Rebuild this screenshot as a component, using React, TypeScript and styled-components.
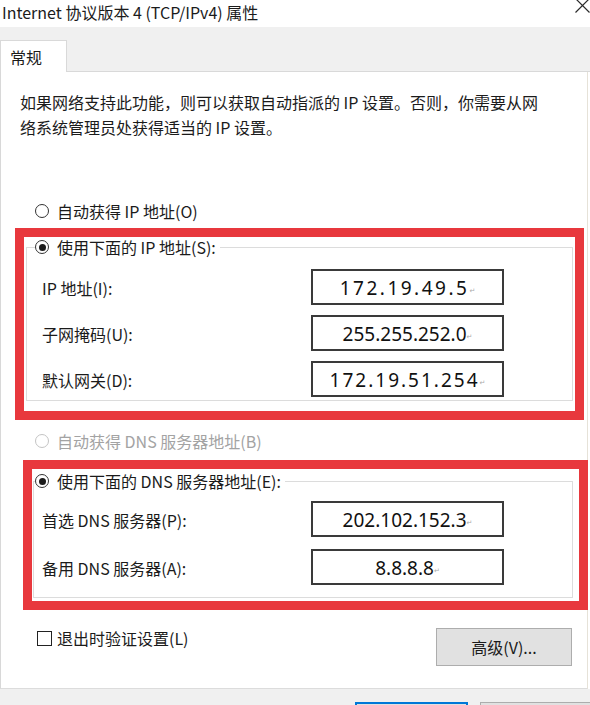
import React from 'react';
import styled, { createGlobalStyle } from 'styled-components';

const Global = createGlobalStyle`
  html, body { margin: 0; padding: 0; background: #fff; }
  body {
    width: 590px; height: 705px; overflow: hidden;
    font-family: "Noto Sans CJK SC", "Noto Sans", sans-serif;
    color: #1b1b1b;
  }
  * { box-sizing: border-box; }
`;

const Window = styled.div`
  width: 590px; height: 705px;
  display: flex; flex-direction: column;
  background: #fff; overflow: hidden;
`;

const TitleBar = styled.div`
  height: 27px; flex: 0 0 auto;
  display: flex; justify-content: space-between; align-items: flex-start;
  padding-left: 2px; background: #fff;
`;

const Title = styled.div`
  font-size: 16px; line-height: normal; white-space: nowrap;
`;

const CloseIcon = styled.svg`
  margin-top: -3px;
  flex: 0 0 auto;
`;

const TabStrip = styled.div`
  height: 45px; flex: 0 0 auto;
  background: #f0f0f0;
  border-bottom: 1px solid #d9d9d9;
  display: flex; align-items: flex-end;
`;

const Tab = styled.div`
  position: relative; z-index: 1;
  width: 67px; height: 32px; margin-bottom: -1px;
  background: #fff;
  border: 1px solid #d9d9d9; border-bottom: none;
  display: flex; align-items: center;
  padding-left: 9px;
  font-size: 16px;
`;

const Panel = styled.div`
  flex: 0 0 auto;
  width: 588px; height: 617px;
  border-left: 1px solid #d8d8d8;
  border-right: 1px solid #e6e2d8;
  border-bottom: 1px solid #dcdcdc;
  display: flex; flex-direction: column; align-items: flex-start;
  padding-top: 18px;
`;

const Description = styled.p`
  margin: 0; padding-left: 19px;
  font-size: 16px; line-height: 25px; height: 50px;
  white-space: nowrap;
`;

const RadioRow = styled.div<{ $top: number; $disabled?: boolean }>`
  display: flex; align-items: center; gap: 8px;
  height: 20px; margin-top: ${p => p.$top}px;
  padding-left: 34px;
  font-size: 16px;
  color: ${p => (p.$disabled ? '#a3a3a3' : '#1b1b1b')};
`;

const RadioCircle = styled.span<{ $checked?: boolean; $disabled?: boolean }>`
  width: 14px; height: 14px; border-radius: 50%;
  border: 1px solid ${p => (p.$disabled ? '#c4c4c4' : '#333')};
  background: #fff;
  display: flex; align-items: center; justify-content: center;
  flex: 0 0 auto;
  &::after {
    content: '';
    width: 7px; height: 7px; border-radius: 50%;
    background: ${p => (p.$checked ? '#1b1b1b' : 'transparent')};
  }
`;

const RedBox = styled.div<{ $top: number; $left: number; $width: number }>`
  margin-top: ${p => p.$top}px;
  margin-left: ${p => p.$left}px;
  width: ${p => p.$width}px;
  flex: 0 0 auto;
  border: 9px solid #e8383d;
  display: flex; flex-direction: column;
`;

const Group = styled.div<{ $m: string; $pad: string; $gap: number }>`
  position: relative;
  margin: ${p => p.$m};
  border: 1px solid #dcdcdc;
  padding: ${p => p.$pad};
  display: grid;
  grid-template-columns: 269px 193px;
  row-gap: ${p => p.$gap}px;
  align-items: center;
`;

const Legend = styled.div<{ $left: number }>`
  position: absolute; top: -11px; left: ${p => p.$left}px;
  display: flex; align-items: center; gap: 8px;
  height: 20px; padding-right: 4px;
  background: #fff; font-size: 16px;
`;

const FieldLabel = styled.span`
  font-size: 16px; line-height: 20px; padding-top: 2px;
`;

const AddrBox = styled.div<{ $spacing: number }>`
  width: 193px; height: 36px;
  border: 2px solid #3a3a3a;
  display: flex; align-items: center; justify-content: center;
  font-family: "Noto Sans", "DejaVu Sans", sans-serif;
  font-size: 19px;
  letter-spacing: ${p => p.$spacing}px;
  color: #111;
  padding-top: 1px;
`;

const Mark = styled.span`
  font-size: 7px; color: #aaa; letter-spacing: 0; align-self: flex-end; margin-bottom: 8px;
`;

const BottomRow = styled.div`
  margin-top: 18px; width: 100%;
  display: flex; justify-content: space-between; align-items: flex-start;
  padding-left: 36px; padding-right: 15px;
`;

const CheckLabel = styled.div`
  margin-top: 1px; height: 18px;
  display: flex; align-items: center; gap: 5px;
  font-size: 16px;
`;

const CheckBox = styled.span`
  width: 15px; height: 15px; border: 1px solid #222; background: #fff;
  flex: 0 0 auto;
`;

const Button = styled.div`
  width: 136px; height: 38px;
  background: #e1e1e1; border: 1px solid #adadad;
  display: flex; align-items: center; justify-content: center;
  font-size: 16px;
`;

const Footer = styled.div`
  flex: 1 1 auto;
  background: #f0f0f0;
  display: flex; gap: 12px;
  padding-top: 13px; padding-left: 355px;
`;

const FooterButton = styled.div<{ $primary?: boolean; $w: number }>`
  width: ${p => p.$w}px; height: 30px; flex: 0 0 auto;
  background: #e1e1e1;
  border: ${p => (p.$primary ? '2px solid #0078d7' : '1px solid #adadad')};
`;

type Field = { label: string; value: string; spacing: number };

const ipFields: Field[] = [
  { label: 'IP 地址(I):', value: '172.19.49.5', spacing: 2.5 },
  { label: '子网掩码(U):', value: '255.255.252.0', spacing: 0 },
  { label: '默认网关(D):', value: '172.19.51.254', spacing: 2 },
];

const dnsFields: Field[] = [
  { label: '首选 DNS 服务器(P):', value: '202.102.152.3', spacing: 0 },
  { label: '备用 DNS 服务器(A):', value: '8.8.8.8', spacing: 0 },
];

const Fields = ({ items }: { items: Field[] }) => (
  <>
    {items.map(f => (
      <React.Fragment key={f.label}>
        <FieldLabel>{f.label}</FieldLabel>
        <AddrBox $spacing={f.spacing}>
          {f.value}
          <Mark>↵</Mark>
        </AddrBox>
      </React.Fragment>
    ))}
  </>
);

export default function App() {
  return (
    <>
      <Global />
      <Window>
        <TitleBar>
          <Title>Internet 协议版本 4 (TCP/IPv4) 属性</Title>
          <CloseIcon width="16" height="16" viewBox="0 0 16 16">
            <path d="M1.5 1.5 L15.5 15.5 M15.5 1.5 L1.5 15.5" stroke="#2b2b2b" strokeWidth="1.2" fill="none" />
          </CloseIcon>
        </TitleBar>
        <TabStrip>
          <Tab>常规</Tab>
        </TabStrip>
        <Panel>
          <Description>
            如果网络支持此功能，则可以获取自动指派的 IP 设置。否则，你需要从网
            <br />
            络系统管理员处获得适当的 IP 设置。
          </Description>

          <RadioRow $top={61}>
            <RadioCircle />
            自动获得 IP 地址(O)
          </RadioRow>

          <RedBox $top={7} $left={14} $width={569}>
            <Group $m="10px 2px 10px 2px" $pad="21px 0 3px 15px" $gap={10}>
              <Legend $left={8}>
                <RadioCircle $checked />
                使用下面的 IP 地址(S):
              </Legend>
              <Fields items={ipFields} />
            </Group>
          </RedBox>

          <RadioRow $top={11} $disabled>
            <RadioCircle $disabled />
            自动获得 DNS 服务器地址(B)
          </RadioRow>

          <RedBox $top={9} $left={22} $width={565}>
            <Group $m="12px 6px 3px 1px" $pad="19px 0 12px 8px" $gap={12}>
              <Legend $left={1}>
                <RadioCircle $checked />
                使用下面的 DNS 服务器地址(E):
              </Legend>
              <Fields items={dnsFields} />
            </Group>
          </RedBox>

          <BottomRow>
            <CheckLabel>
              <CheckBox />
              退出时验证设置(L)
            </CheckLabel>
            <Button>高级(V)...</Button>
          </BottomRow>
        </Panel>
        <Footer>
          <FooterButton $primary $w={113} />
          <FooterButton $w={112} />
        </Footer>
      </Window>
    </>
  );
}
